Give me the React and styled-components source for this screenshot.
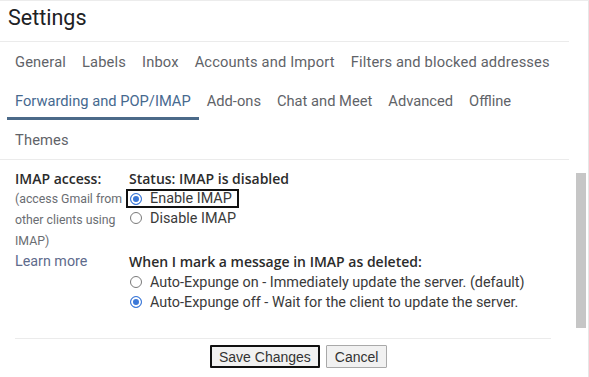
import styled, { createGlobalStyle } from "styled-components";

const Global = createGlobalStyle`
  html, body { margin: 0; padding: 0; background: #fff; }
  body { font-family: Roboto, "Noto Sans", sans-serif; color: #202124; }
`;

const Frame = styled.div`
  display: flex;
  width: 588px;
  height: 376px;
  border-top: 1px solid #ececec;
  border-right: 1px solid #e6e6e6;
  border-bottom: 1px solid #ececec;
  overflow: hidden;
`;

const Main = styled.div`
  width: 569px;
  display: flex;
  flex-direction: column;
`;

const Gutter = styled.div`
  flex: 1;
  display: flex;
  justify-content: center;
`;

const Thumb = styled.div`
  width: 10px;
  height: 155px;
  margin-top: 172px;
  margin-left: 4px;
  background: #c6c6c6;
`;

const Title = styled.h1`
  margin: 0;
  height: 40px;
  padding-left: 8px;
  font-size: 21.5px;
  font-weight: 400;
  line-height: 33px;
  color: #202124;
  border-bottom: 1px solid #ebebeb;
`;

const Tabs = styled.div`
  display: flex;
  flex-wrap: wrap;
  padding-left: 7px;
  border-bottom: 1px solid #ebebeb;
`;

const TabBreak = styled.div`
  flex-basis: 100%;
  height: 0;
`;

const Tab = styled.div`
  height: 39px;
  padding: 3px 8px 0;
  box-sizing: border-box;
  display: flex;
  align-items: center;
  font-size: 14.7px;
  letter-spacing: ${(p) => (p.$tight ? "0" : "0.15px")};
  color: ${(p) => (p.$active ? "#46698f" : "#5f6368")};
  border-bottom: 3px solid ${(p) => (p.$active ? "#4b6a89" : "transparent")};
`;

const Body = styled.div`
  display: grid;
  grid-template-columns: 114px 1fr;
  padding: 8px 0 0 15px;
  font-size: 13px;
`;

const Label = styled.div`
  display: flex;
  flex-direction: column;
`;

const Strong = styled.div`
  font-family: "Open Sans", Roboto, sans-serif;
  font-weight: 600;
  font-size: 14px;
  color: #2b2b2b;
  line-height: 21px;
`;

const Hint = styled.div`
  color: #6a6d72;
  font-size: 12.3px;
  line-height: 21px;
  white-space: nowrap;
`;

const Link = styled.div`
  color: #5e6b8c;
  line-height: 19px;
  font-size: 14.3px;
`;

const Options = styled.div`
  display: flex;
  flex-direction: column;
`;

const Group = styled.div`
  display: flex;
  flex-direction: column;
  margin-bottom: ${(p) => p.$gap || 0}px;
`;

const Option = styled.label`
  display: flex;
  align-items: center;
  gap: 8px;
  height: 20px;
  font-size: 14.4px;
  color: #3a3a3a;
  align-self: flex-start;
  box-sizing: border-box;
  padding-left: 1px;
  ${(p) =>
    p.$boxed &&
    `
    border: 2px solid #111;
    margin-left: -3px;
    padding: 0 5px 0 2px;
    height: 19px;
  `}
`;

const Radio = styled.span`
  width: 12px;
  height: 12px;
  border-radius: 50%;
  box-sizing: border-box;
  border: 1px solid ${(p) => (p.$checked ? "#3b78d8" : "#7a7a7a")};
  background: ${(p) => (p.$checked ? "#3b78d8" : "#fff")};
  box-shadow: ${(p) => (p.$checked ? "inset 0 0 0 2px #fff" : "none")};
  flex-shrink: 0;
`;

const Footer = styled.div`
  margin: auto 18px 0 15px;
  border-top: 1px solid #ebebeb;
  padding: 6px 0 9px 195px;
  display: flex;
  gap: 6px;
`;

const Button = styled.button`
  font-family: "Liberation Sans", Arial, sans-serif;
  font-size: 14px;
  color: #333;
  background: #f1f1f1;
  height: 23px;
  padding: 0 ${(p) => (p.$primary ? 7 : 8)}px;
  border: ${(p) => (p.$primary ? "2px solid #111" : "1px solid #a9a9a9")};
  border-radius: 1px;
  line-height: 1;
`;

const tabs1 = ["General", "Labels", "Inbox", "Accounts and Import", "Filters and blocked addresses"];
const tabs2 = ["Forwarding and POP/IMAP", "Add-ons", "Chat and Meet", "Advanced", "Offline"];

export default function App() {
  return (
    <>
      <Global />
      <Frame>
        <Main>
          <Title>Settings</Title>
          <Tabs>
            {tabs1.map((t) => (
              <Tab key={t}>{t}</Tab>
            ))}
            <TabBreak />
            {tabs2.map((t, i) => (
              <Tab key={t} $active={i === 0} $tight>
                {t}
              </Tab>
            ))}
            <TabBreak />
            <Tab>Themes</Tab>
          </Tabs>

          <Body>
            <Label>
              <Strong>IMAP access:</Strong>
              <Hint>(access Gmail from</Hint>
              <Hint>other clients using</Hint>
              <Hint>IMAP)</Hint>
              <Link>Learn more</Link>
            </Label>
            <Options>
              <Group $gap={23}>
                <Strong>Status: IMAP is disabled</Strong>
                <Option $boxed>
                  <Radio $checked />
                  Enable IMAP
                </Option>
                <Option>
                  <Radio />
                  Disable IMAP
                </Option>
              </Group>
              <Group>
                <Strong>When I mark a message in IMAP as deleted:</Strong>
                <Option>
                  <Radio />
                  Auto-Expunge on - Immediately update the server. (default)
                </Option>
                <Option>
                  <Radio $checked />
                  Auto-Expunge off - Wait for the client to update the server.
                </Option>
              </Group>
            </Options>
          </Body>

          <Footer>
            <Button $primary>Save Changes</Button>
            <Button>Cancel</Button>
          </Footer>
        </Main>
        <Gutter>
          <Thumb />
        </Gutter>
      </Frame>
    </>
  );
}
